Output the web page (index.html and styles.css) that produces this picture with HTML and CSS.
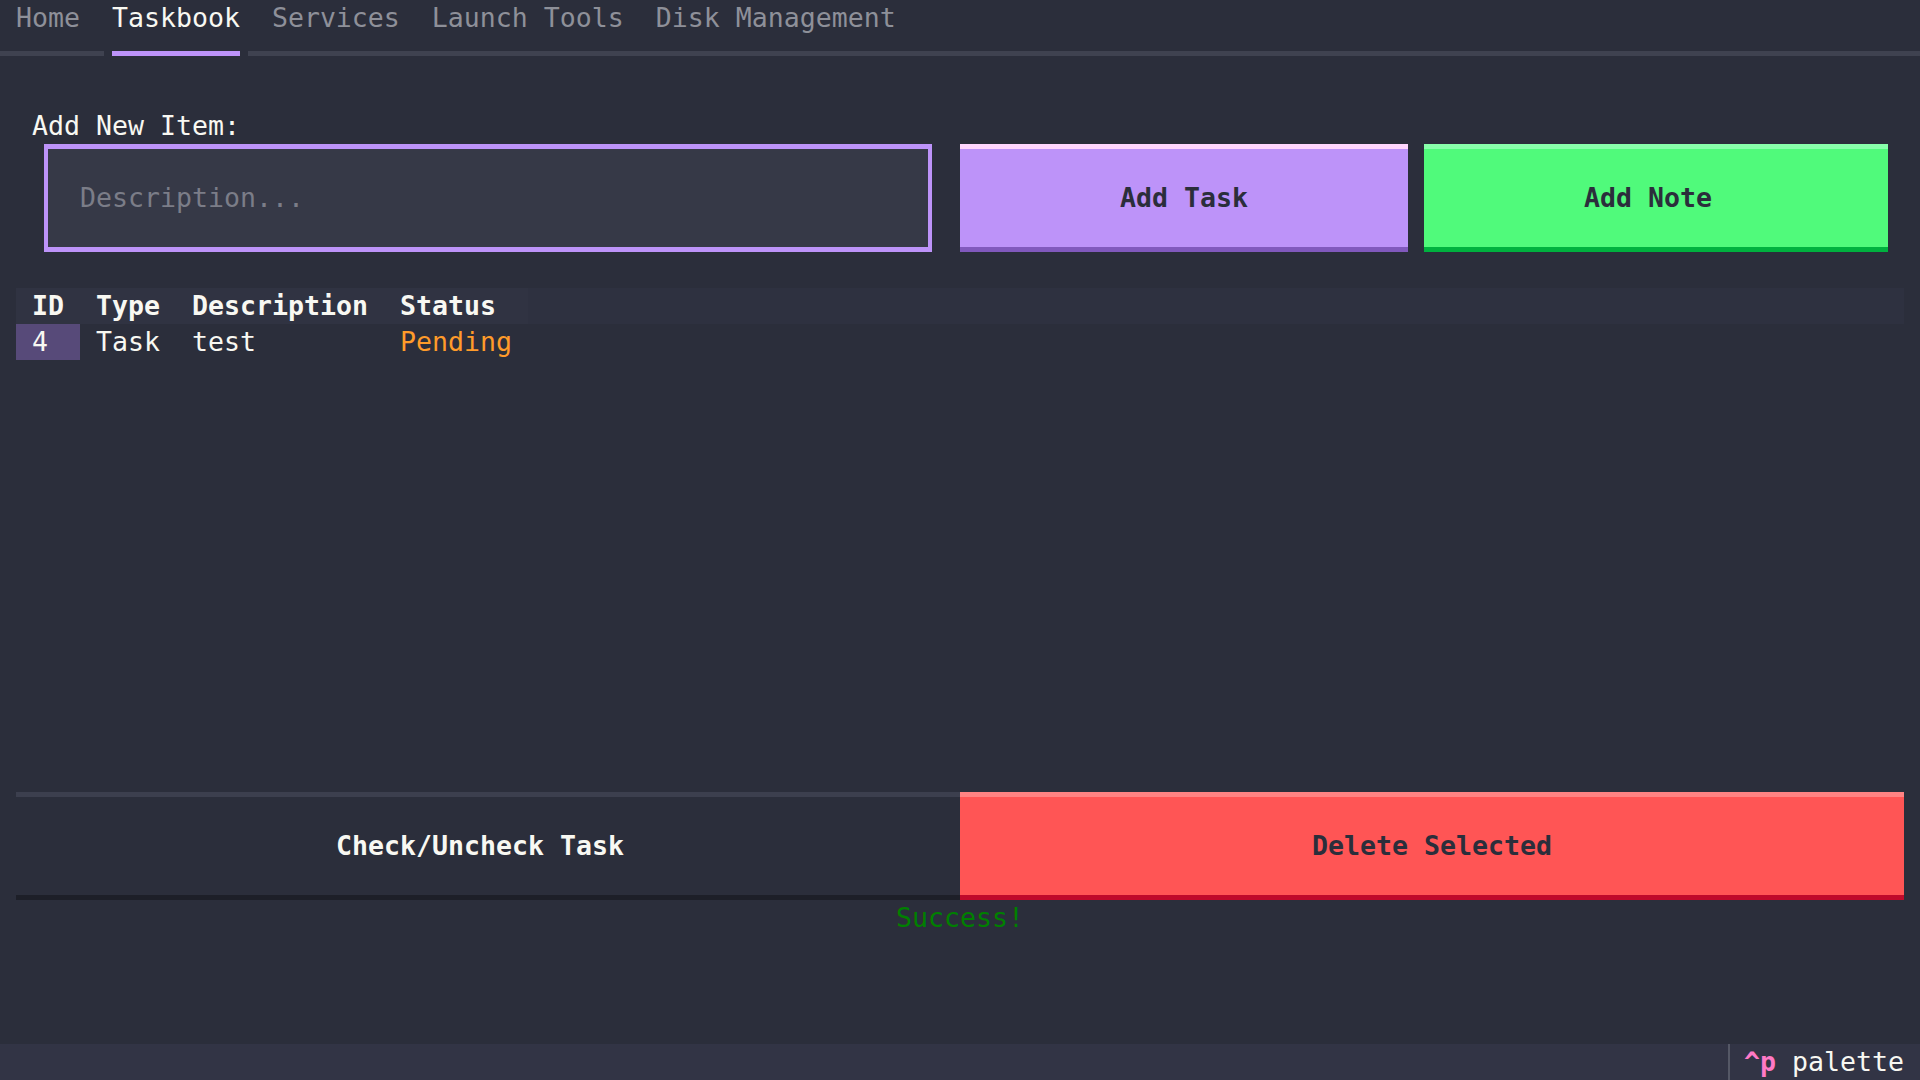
FILE: index.html
```html
<!DOCTYPE html>
<html lang="en">
<head>
<meta charset="utf-8">
<title>Taskbook</title>
<link rel="stylesheet" href="styles.css">
</head>
<body>
<div class="app">
  <header class="tabs">
    <nav class="tab-row">
      <span class="tab">Home</span>
      <span class="tab active">Taskbook</span>
      <span class="tab">Services</span>
      <span class="tab">Launch Tools</span>
      <span class="tab">Disk Management</span>
    </nav>
    <div class="underline">
      <span class="bar bar-left"></span>
      <span class="bar bar-active"></span>
      <span class="bar bar-right"></span>
    </div>
  </header>

  <main class="content">
    <div class="label">Add New Item:</div>
    <div class="add-row">
      <div class="input"><span class="placeholder">Description...</span></div>
      <button class="btn btn-primary">Add Task</button>
      <button class="btn btn-success btn-shift">Add Note</button>
    </div>

    <section class="table">
      <div class="thead">
        <div class="cell head c-id">ID</div>
        <div class="cell head c-type">Type</div>
        <div class="cell head c-desc">Description</div>
        <div class="cell head c-status">Status</div>
        <div class="head-rest"></div>
      </div>
      <div class="trow">
        <div class="cell c-id cursor">4</div>
        <div class="cell c-type">Task</div>
        <div class="cell c-desc">test</div>
        <div class="cell c-status pending">Pending</div>
      </div>
    </section>

    <div class="action-row">
      <button class="btn btn-default btn-shift">Check/Uncheck Task</button>
      <button class="btn btn-error">Delete Selected</button>
    </div>
    <div class="status-msg">Success!</div>
  </main>

  <footer class="footer">
    <div class="footer-key"><span class="key">^p</span> <span class="key-desc">palette</span></div>
  </footer>
</div>
</body>
</html>
```

FILE: styles.css
```css
* { box-sizing: border-box; }

html, body {
  margin: 0;
  padding: 0;
  background: #2b2e3b;
}

body {
  font-family: "DejaVu Sans Mono", "Liberation Mono", monospace;
  font-size: 26.57px;
  line-height: 36px;
  color: #f8f8f2;
}

.app {
  display: flex;
  flex-direction: column;
  width: 1920px;
  height: 1080px;
  overflow: hidden;
}

/* Tabs */
.tabs { height: 72px; }

.tab-row {
  display: flex;
  height: 36px;
}

.tab {
  padding: 0 16px;
  color: #8e9099;
  white-space: pre;
}

.tab.active { color: #f8f8f2; }

.underline {
  display: flex;
  height: 36px;
  padding-top: 51px;
  padding-top: 15px;
}

.bar {
  height: 5px;
  background: #3f4250;
}

.bar-left { width: 104px; }
.bar-active { width: 128px; margin-left: 8px; margin-right: 8px; background: #bd93f9; }
.bar-right { flex: 1; }

/* Content */
.content {
  flex: 1;
  display: flex;
  flex-direction: column;
}

.label {
  margin-top: 36px;
  padding-left: 32px;
  height: 36px;
}

.add-row {
  display: flex;
  height: 108px;
}

.input {
  margin-left: 44px;
  width: 888px;
  height: 108px;
  background: #363947;
  border: 4px solid #bd93f9;
  border-top-width: 5px;
  border-bottom-width: 5px;
  display: flex;
  align-items: center;
  padding-left: 32px;
}

.placeholder { color: #7b7d88; }

.btn {
  font: inherit;
  font-weight: bold;
  line-height: 36px;
  border: none;
  border-top: 5px solid;
  border-bottom: 5px solid;
  height: 108px;
  padding: 0;
  display: flex;
  align-items: center;
  justify-content: center;
  color: #2b2e3b;
}

.add-row .btn-primary {
  margin-left: 28px;
  width: 448px;
}

.add-row .btn-success {
  margin-left: 16px;
  width: 464px;
}

.btn-shift { padding-right: 16px; }

.btn-primary {
  background: #bd93f9;
  border-top-color: #ffd6fd;
  border-bottom-color: #8159bd;
}

.btn-success {
  background: #50fa7b;
  border-top-color: #88ffab;
  border-bottom-color: #00b13f;
}

.btn-error {
  background: #ff5555;
  border-top-color: #ff8383;
  border-bottom-color: #bf0a2b;
}

.btn-default {
  background: #2b2e3b;
  color: #f8f8f2;
  border-top-color: #3c3f4e;
  border-bottom-color: #1d1f28;
}

/* Table */
.table {
  margin: 36px 16px 0 16px;
  height: 504px;
}

.thead, .trow {
  display: flex;
  height: 36px;
}

.thead { background: #2e3140; }

.cell {
  padding: 0 16px;
  white-space: pre;
}

.head {
  font-weight: bold;
  background: #303342;
}

.c-id { width: 64px; }
.c-type { width: 96px; }
.c-desc { width: 208px; }
.c-status { width: 144px; }

.cursor { background: #574a79; }
.pending { color: #ff9b2a; }

/* Bottom actions */
.action-row {
  display: flex;
  margin: 0 16px;
  height: 108px;
}

.action-row .btn { width: 944px; }

.status-msg {
  height: 36px;
  text-align: center;
  color: #008000;
}

/* Footer */
.footer {
  height: 36px;
  background: #323445;
  display: flex;
  justify-content: flex-end;
}

.footer-key {
  border-left: 2px solid #555866;
  padding-left: 14px;
  padding-right: 16px;
  white-space: pre;
}

.key { color: #ff79c6; font-weight: bold; }
.key-desc { color: #f8f8f2; }
```
